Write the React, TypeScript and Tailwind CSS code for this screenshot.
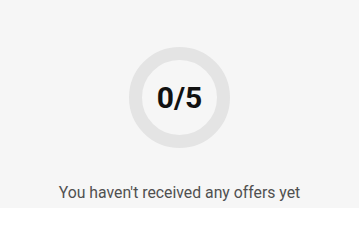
export default function App() {
  return (
    <div
      className="flex h-[208px] w-full flex-col items-center bg-[#f6f6f6] pt-[47px]"
      style={{ fontFamily: "Roboto, 'Noto Sans', sans-serif" }}
    >
      <div className="flex h-[101px] w-[101px] items-center justify-center rounded-full border-[13px] border-[#e4e4e4]">
        <span className="text-[30px] font-bold leading-none text-[#111]">0/5</span>
      </div>
      <p className="mt-[35px] text-[15.8px] leading-[20px] text-[#505050]">
        You haven't received any offers yet
      </p>
    </div>
  );
}
